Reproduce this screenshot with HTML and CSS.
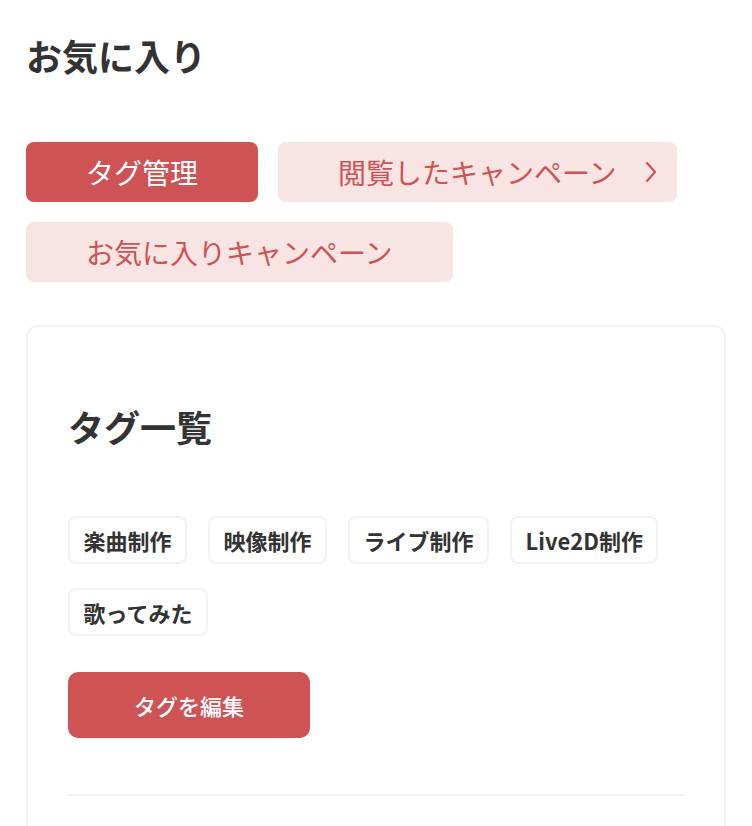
FILE: index.html
```html
<!DOCTYPE html>
<html lang="ja">
<head>
<meta charset="utf-8">
<title>お気に入り</title>
<link rel="stylesheet" href="styles.css">
</head>
<body>
<main class="page">
  <h1 class="page-title">お気に入り</h1>
  <nav class="tabs">
    <a class="tab tab-active">タグ管理</a>
    <a class="tab tab-link">閲覧したキャンペーン
      <svg class="chev" width="14" height="22" viewBox="0 0 14 22"><path d="M3 2 L11 11 L3 20" fill="none" stroke="currentColor" stroke-width="2.2" stroke-linecap="round" stroke-linejoin="round"/></svg>
    </a>
    <a class="tab">お気に入りキャンペーン</a>
  </nav>
  <section class="card">
    <h2 class="card-title">タグ一覧</h2>
    <ul class="tags">
      <li class="tag">楽曲制作</li>
      <li class="tag">映像制作</li>
      <li class="tag">ライブ制作</li>
      <li class="tag">Live2D制作</li>
      <li class="tag">歌ってみた</li>
    </ul>
    <button class="edit-btn">タグを編集</button>
    <hr class="divider">
    <div class="card-rest"></div>
  </section>
</main>
</body>
</html>
```
FILE: styles.css
```css
* { box-sizing: border-box; }
html, body { margin: 0; padding: 0; background: #fff; }
body {
  font-family: "Noto Sans CJK JP", "Noto Sans", sans-serif;
  color: #333;
}
.page { padding: 28px 26px 0 26px; }
.page-title {
  margin: 0;
  font-size: 36px;
  line-height: 54px;
  font-weight: 700;
  color: #333;
}
.tabs {
  margin-top: 60px;
  display: flex;
  flex-wrap: wrap;
  gap: 20px;
}
.tab {
  position: relative;
  display: block;
  height: 60px;
  line-height: 60px;
  padding: 0 60px;
  border-radius: 8px;
  background: #f7e4e3;
  color: #cd5355;
  font-size: 28px;
  font-weight: 400;
  text-decoration: none;
  white-space: nowrap;
}
.tab-active { background: #cd5355; color: #fff; }
.chev {
  position: absolute;
  right: 19px;
  top: 50%;
  transform: translateY(-50%);
}
.card {
  margin-top: 43px;
  border: 2px solid #f2f2f2;
  border-radius: 12px;
  padding: 40px 40px 0 40px;
}
.card-title {
  margin: 32px 0 0 0;
  font-size: 36px;
  line-height: 54px;
  font-weight: 700;
  color: #333;
}
.tags {
  list-style: none;
  margin: 63px 0 0 0;
  padding: 0;
  display: flex;
  flex-wrap: wrap;
  column-gap: 21px;
  row-gap: 24px;
}
.tag {
  height: 48px;
  line-height: 44px;
  padding: 0 13.5px;
  border: 2px solid #f2f2f2;
  border-radius: 8px;
  font-size: 22px;
  font-weight: 700;
  color: #333;
}
.edit-btn {
  display: block;
  margin-top: 36px;
  width: 242px;
  height: 66px;
  border: none;
  border-radius: 10px;
  background: #cd5355;
  color: #fff;
  font-family: inherit;
  font-size: 22px;
  font-weight: 500;
  cursor: pointer;
}
.divider {
  margin: 56px 0 0 0;
  border: none;
  height: 2px;
  background: #f2f2f2;
}
.card-rest { height: 120px; }
```
